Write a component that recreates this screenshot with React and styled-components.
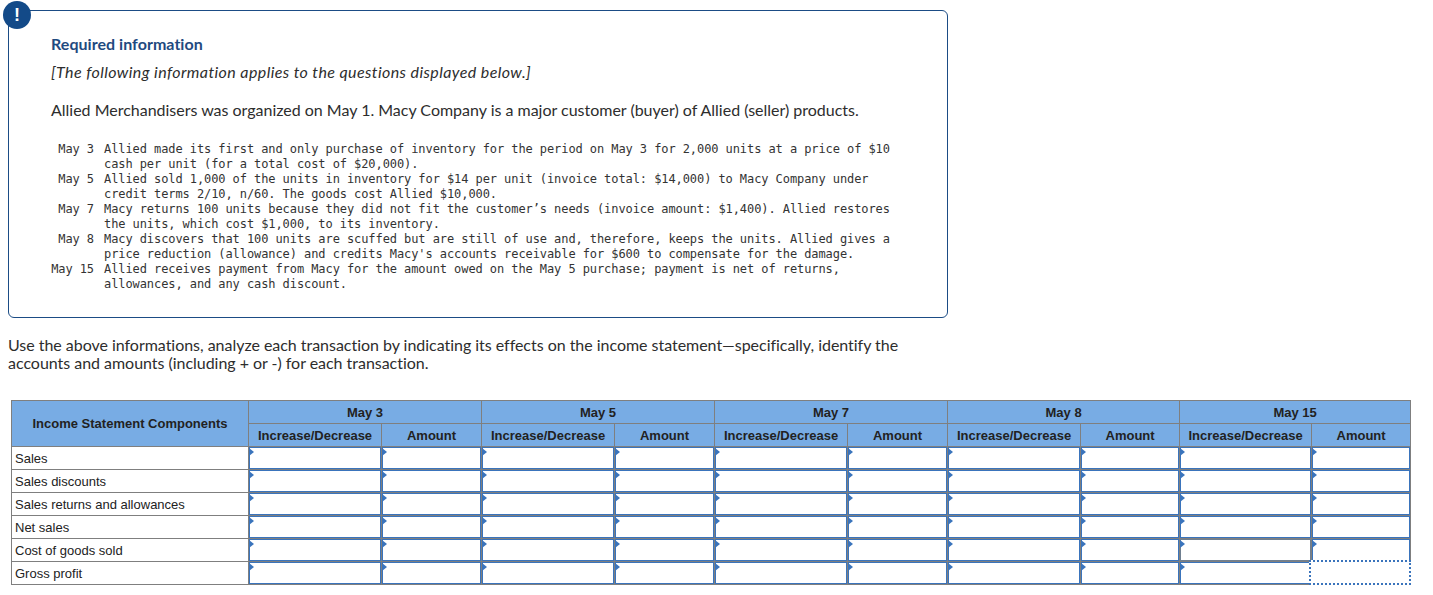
import React from 'react'
import styled, { createGlobalStyle } from 'styled-components'

const GlobalStyle = createGlobalStyle`
  html, body {
    margin: 0;
    padding: 0;
    background: #fff;
  }
`

const Page = styled.div`
  width: 1433px;
  height: 595px;
  overflow: hidden;
  box-sizing: border-box;
  padding: 10px 0 0 8px;
  font-family: "Lato", "Open Sans", sans-serif;
  color: #2d2d2d;
`

const InfoBox = styled.section`
  position: relative;
  box-sizing: border-box;
  width: 940px;
  height: 308px;
  padding: 24px 42px 0;
  border: 1px solid #1b4c85;
  border-radius: 6px;
`

const Badge = styled.span`
  position: absolute;
  left: -6px;
  top: -10px;
  width: 28px;
  height: 28px;
  border-radius: 50%;
  background: #134a88;
  color: #fff;
  font: bold 18px/28px "Liberation Sans", sans-serif;
  text-align: center;
`

const Title = styled.h2`
  margin: 0;
  font-size: 16px;
  line-height: 18px;
  font-weight: 700;
  letter-spacing: 0.04px;
  color: #1f4a80;
`

const Note = styled.p`
  margin: 9px 0 0;
  font-size: 16px;
  line-height: 20px;
  font-style: italic;
  letter-spacing: 0.41px;
`

const Lead = styled.p`
  margin: 18px 0 0;
  font-size: 16px;
  line-height: 20px;
  letter-spacing: -0.01px;
`

const Events = styled.div`
  margin: 22px 0 0;
  display: grid;
  grid-template-columns: 43px 1fr;
  column-gap: 10px;
  font: 12px/15px "DejaVu Sans Mono", monospace;
  letter-spacing: -0.08px;
  color: #333;
`

const EventDate = styled.span`
  text-align: right;
  white-space: pre;
`

const EventText = styled.span`
  white-space: pre;
`

const Prompt = styled.p`
  margin: 18px 0 0;
  width: 910px;
  font-size: 16px;
  line-height: 18px;
  letter-spacing: -0.03px;
`

const SheetTable = styled.table`
  margin: 28px 0 0 3px;
  width: 1400px;
  table-layout: fixed;
  border-collapse: separate;
  border-spacing: 0;
  border-top: 1px solid #7f7f7f;
  border-left: 1px solid #7f7f7f;
  font-family: "Liberation Sans", sans-serif;
  font-size: 13px;
  color: #222;
`

const HeadCell = styled.th`
  height: 22px;
  padding: 0;
  border-right: 1px solid #7f7f7f;
  border-bottom: 1px solid #7f7f7f;
  background: #78ace4;
  font-weight: bold;
  text-align: center;
`

const LabelCell = styled.td`
  height: 22px;
  padding: 0 0 0 3px;
  border-right: 1px solid #7f7f7f;
  border-bottom: 1px solid #7f7f7f;
`

const InputCell = styled.td`
  position: relative;
  height: 22px;
  padding: 0;
  border-right: 1px solid #7f7f7f;
  border-bottom: 1px solid #7f7f7f;
  box-shadow: inset 0 0 0 1px ${props => (props.$beside ? '#6f7f90' : '#3a74bc')};
`

const Marker = styled.span`
  position: absolute;
  left: 0;
  top: 1px;
  width: 0;
  height: 0;
  border-top: 4px solid transparent;
  border-bottom: 4px solid transparent;
  border-left: 5px solid #3a74bc;
`

const FocusOutline = styled.span`
  position: absolute;
  top: -2px;
  right: -1px;
  bottom: -1px;
  left: -3px;
  background: #fff;
  border: 2px dotted #3a74bc;
`

const events = [
  ['May 3', 'Allied made its first and only purchase of inventory for the period on May 3 for 2,000 units at a price of $10\ncash per unit (for a total cost of $20,000).'],
  ['May 5', 'Allied sold 1,000 of the units in inventory for $14 per unit (invoice total: $14,000) to Macy Company under\ncredit terms 2/10, n/60. The goods cost Allied $10,000.'],
  ['May 7', 'Macy returns 100 units because they did not fit the customer\u2019s needs (invoice amount: $1,400). Allied restores\nthe units, which cost $1,000, to its inventory.'],
  ['May 8', 'Macy discovers that 100 units are scuffed but are still of use and, therefore, keeps the units. Allied gives a\nprice reduction (allowance) and credits Macy\'s accounts receivable for $600 to compensate for the damage.'],
  ['May 15', 'Allied receives payment from Macy for the amount owed on the May 5 purchase; payment is net of returns,\nallowances, and any cash discount.'],
]

const days = ['May 3', 'May 5', 'May 7', 'May 8', 'May 15']
const rows = ['Sales', 'Sales discounts', 'Sales returns and allowances', 'Net sales', 'Cost of goods sold', 'Gross profit']
const columnWidths = [133, 100, 133, 100, 133, 100, 133, 99, 132, 99]

const App = () => (
  <Page>
    <GlobalStyle />
    <InfoBox>
      <Badge>!</Badge>
      <Title>Required information</Title>
      <Note>[The following information applies to the questions displayed below.]</Note>
      <Lead>Allied Merchandisers was organized on May 1. Macy Company is a major customer (buyer) of Allied (seller) products.</Lead>
      <Events>
        {events.map(([date, text]) => (
          <React.Fragment key={date}>
            <EventDate>{date}</EventDate>
            <EventText>{text}</EventText>
          </React.Fragment>
        ))}
      </Events>
    </InfoBox>
    <Prompt>
      Use the above informations, analyze each transaction by indicating its effects on the income statement—specifically, identify the accounts and amounts (including + or -) for each transaction.
    </Prompt>
    <SheetTable>
      <colgroup>
        <col style={{ width: 237 }} />
        {columnWidths.map((width, index) => <col key={index} style={{ width }} />)}
      </colgroup>
      <thead>
        <tr>
          <HeadCell rowSpan={2}>Income Statement Components</HeadCell>
          {days.map(day => <HeadCell key={day} colSpan={2}>{day}</HeadCell>)}
        </tr>
        <tr>
          {days.map(day => (
            <React.Fragment key={day}>
              <HeadCell>Increase/Decrease</HeadCell>
              <HeadCell>Amount</HeadCell>
            </React.Fragment>
          ))}
        </tr>
      </thead>
      <tbody>
        {rows.map((row, rowIndex) => (
          <tr key={row}>
            <LabelCell>{row}</LabelCell>
            {columnWidths.map((_, cellIndex) => {
              const lastCell = cellIndex === columnWidths.length - 1
              const focused = rowIndex === rows.length - 1 && lastCell
              const beside = rowIndex === rows.length - 2 && cellIndex === columnWidths.length - 2
              return (
                <InputCell key={cellIndex} $beside={beside}>
                  {focused ? <FocusOutline /> : <Marker />}
                </InputCell>
              )
            })}
          </tr>
        ))}
      </tbody>
    </SheetTable>
  </Page>
)

export default App
